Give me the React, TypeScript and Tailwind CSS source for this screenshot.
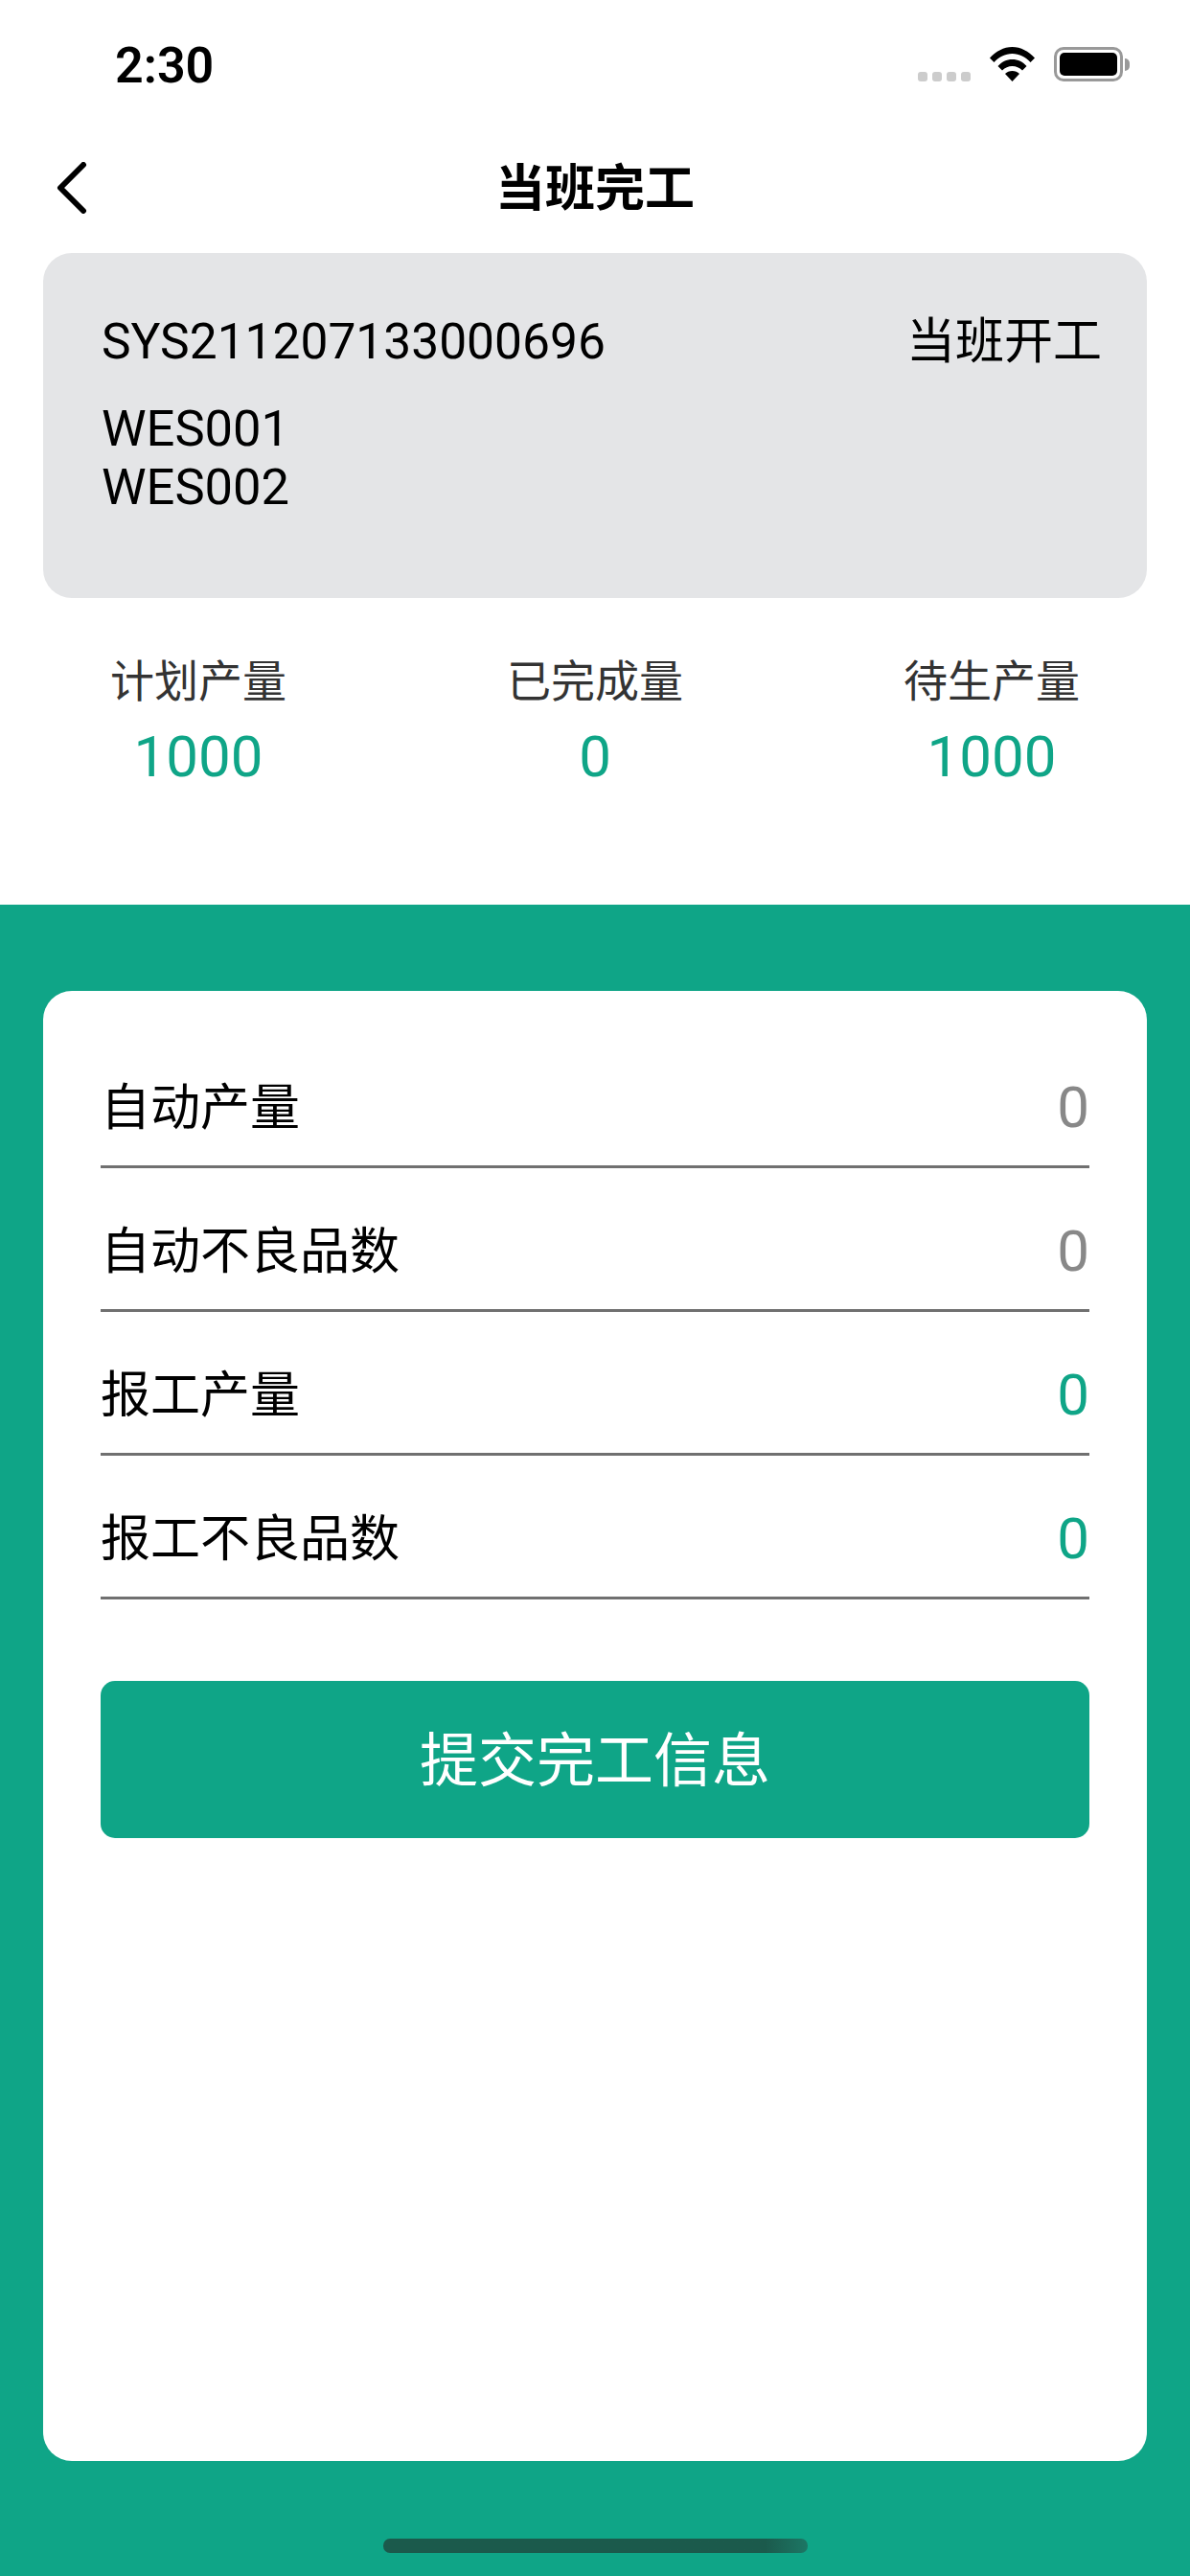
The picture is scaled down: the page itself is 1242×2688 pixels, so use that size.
const stats = [
  { label: '计划产量', value: '1000' },
  { label: '已完成量', value: '0' },
  { label: '待生产量', value: '1000' },
];

const rows = [
  { label: '自动产量', editable: false },
  { label: '自动不良品数', editable: false },
  { label: '报工产量', editable: true },
  { label: '报工不良品数', editable: true },
];

function StatusBar() {
  return (
    <div className="h-[134px] flex justify-between pl-[120px] pr-[63px] pt-[45px]">
      <span className="text-[52px] leading-[48px] font-semibold text-black">2:30</span>
      <div className="flex items-end h-[36px] mt-[4px]">
        <div className="flex gap-[5px] mr-[20px]">
          {[0, 1, 2, 3].map((i) => (
            <span key={i} className="w-[10px] h-[10px] rounded-[3px] bg-[#cccccc]" />
          ))}
        </div>
        <svg className="w-[47px] h-[36px] mr-[20px]" viewBox="0 0 47 36">
          <path d="M0 11.5C6.5 4.5 14.5 0 23.5 0S40.500 4.500 47 11.500L42.500 16C37.500 10.500 31 7 23.500 7S9.500 10.500 4.500 16Z" fill="#000" />
          <path d="M8.500 20C12.500 15.500 17.500 13 23.500 13S34.500 15.500 38.500 20L34 24.500C31 21.500 27.500 20 23.500 20S16 21.500 13 24.500Z" fill="#000" />
          <path d="M16 28C18 26 20.500 25 23.500 25S29 26 31 28L23.500 36Z" fill="#000" />
        </svg>
        <div className="w-[72px] h-[36px] rounded-[10px] border-[3px] border-[#999999] p-[3px]">
          <div className="w-full h-full rounded-[5px] bg-black" />
        </div>
        <span className="w-[5px] h-[13px] mb-[11px] ml-[2px] rounded-r-full bg-[#999999]" />
      </div>
    </div>
  );
}

export default function App() {
  return (
    <div className="h-[2688px] flex flex-col bg-white font-['Roboto','Noto_Sans_CJK_SC',sans-serif] overflow-hidden">
      <StatusBar />

      {/* nav */}
      <div className="relative h-[130px] flex items-center justify-center">
        <svg className="absolute left-[59px] top-[35px] w-[32px] h-[54px]" viewBox="0 0 32 54" fill="none" stroke="#000" strokeWidth={6} strokeLinecap="round" strokeLinejoin="round">
          <path d="M28 3L4 27L28 51" />
        </svg>
        <h1 className="text-[52px] leading-[60px] font-semibold text-black -mt-[2px]">当班完工</h1>
      </div>

      {/* order card */}
      <div className="mx-[45px] h-[360px] rounded-[30px] bg-[#e4e5e7] pt-[62px] pl-[61px] pr-[47px] text-black">
        <div className="flex justify-between leading-[61px]">
          <span className="text-[51.5px]">SYS211207133000696</span>
          <span className="text-[51px]">当班开工</span>
        </div>
        <div className="mt-[30px] text-[52.5px] leading-[61px]">
          <div>WES001</div>
          <div>WES002</div>
        </div>
      </div>

      {/* stats */}
      <div className="h-[320px] grid grid-cols-3 content-start pt-[57px] text-center">
        {stats.map((s) => (
          <div key={s.label}>
            <div className="text-[46px] leading-[60px] text-[#333333]">{s.label}</div>
            <div className="mt-[9px] text-[60px] leading-[80px] text-[#0fa587]">{s.value}</div>
          </div>
        ))}
      </div>

      {/* form */}
      <div className="flex-1 flex flex-col items-center bg-[#0fa587] px-[45px] pt-[90px]">
        <div className="w-full h-[1534px] rounded-[30px] bg-white px-[60px] pt-[35px]">
          {rows.map((r) => (
            <div key={r.label} className="h-[150px] flex items-center justify-between border-b-[3px] border-[#707070] pt-[26px]">
              <span className="mt-[3px] text-[52px] leading-[60px] text-black">{r.label}</span>
              <span className={`text-[60px] leading-[70px] ${r.editable ? 'text-[#0fa587]' : 'text-[#888888]'}`}>0</span>
            </div>
          ))}
          <button className="mt-[85px] w-full h-[164px] rounded-[15px] bg-[#0fa587] pt-[5px] text-[61px] text-white">
            提交完工信息
          </button>
        </div>
        <div className="mt-[81px] w-[443px] h-[15px] rounded-[7px] bg-gradient-to-r from-[#1b5a4c] from-90% to-[#1c7765]" />
      </div>
    </div>
  );
}
